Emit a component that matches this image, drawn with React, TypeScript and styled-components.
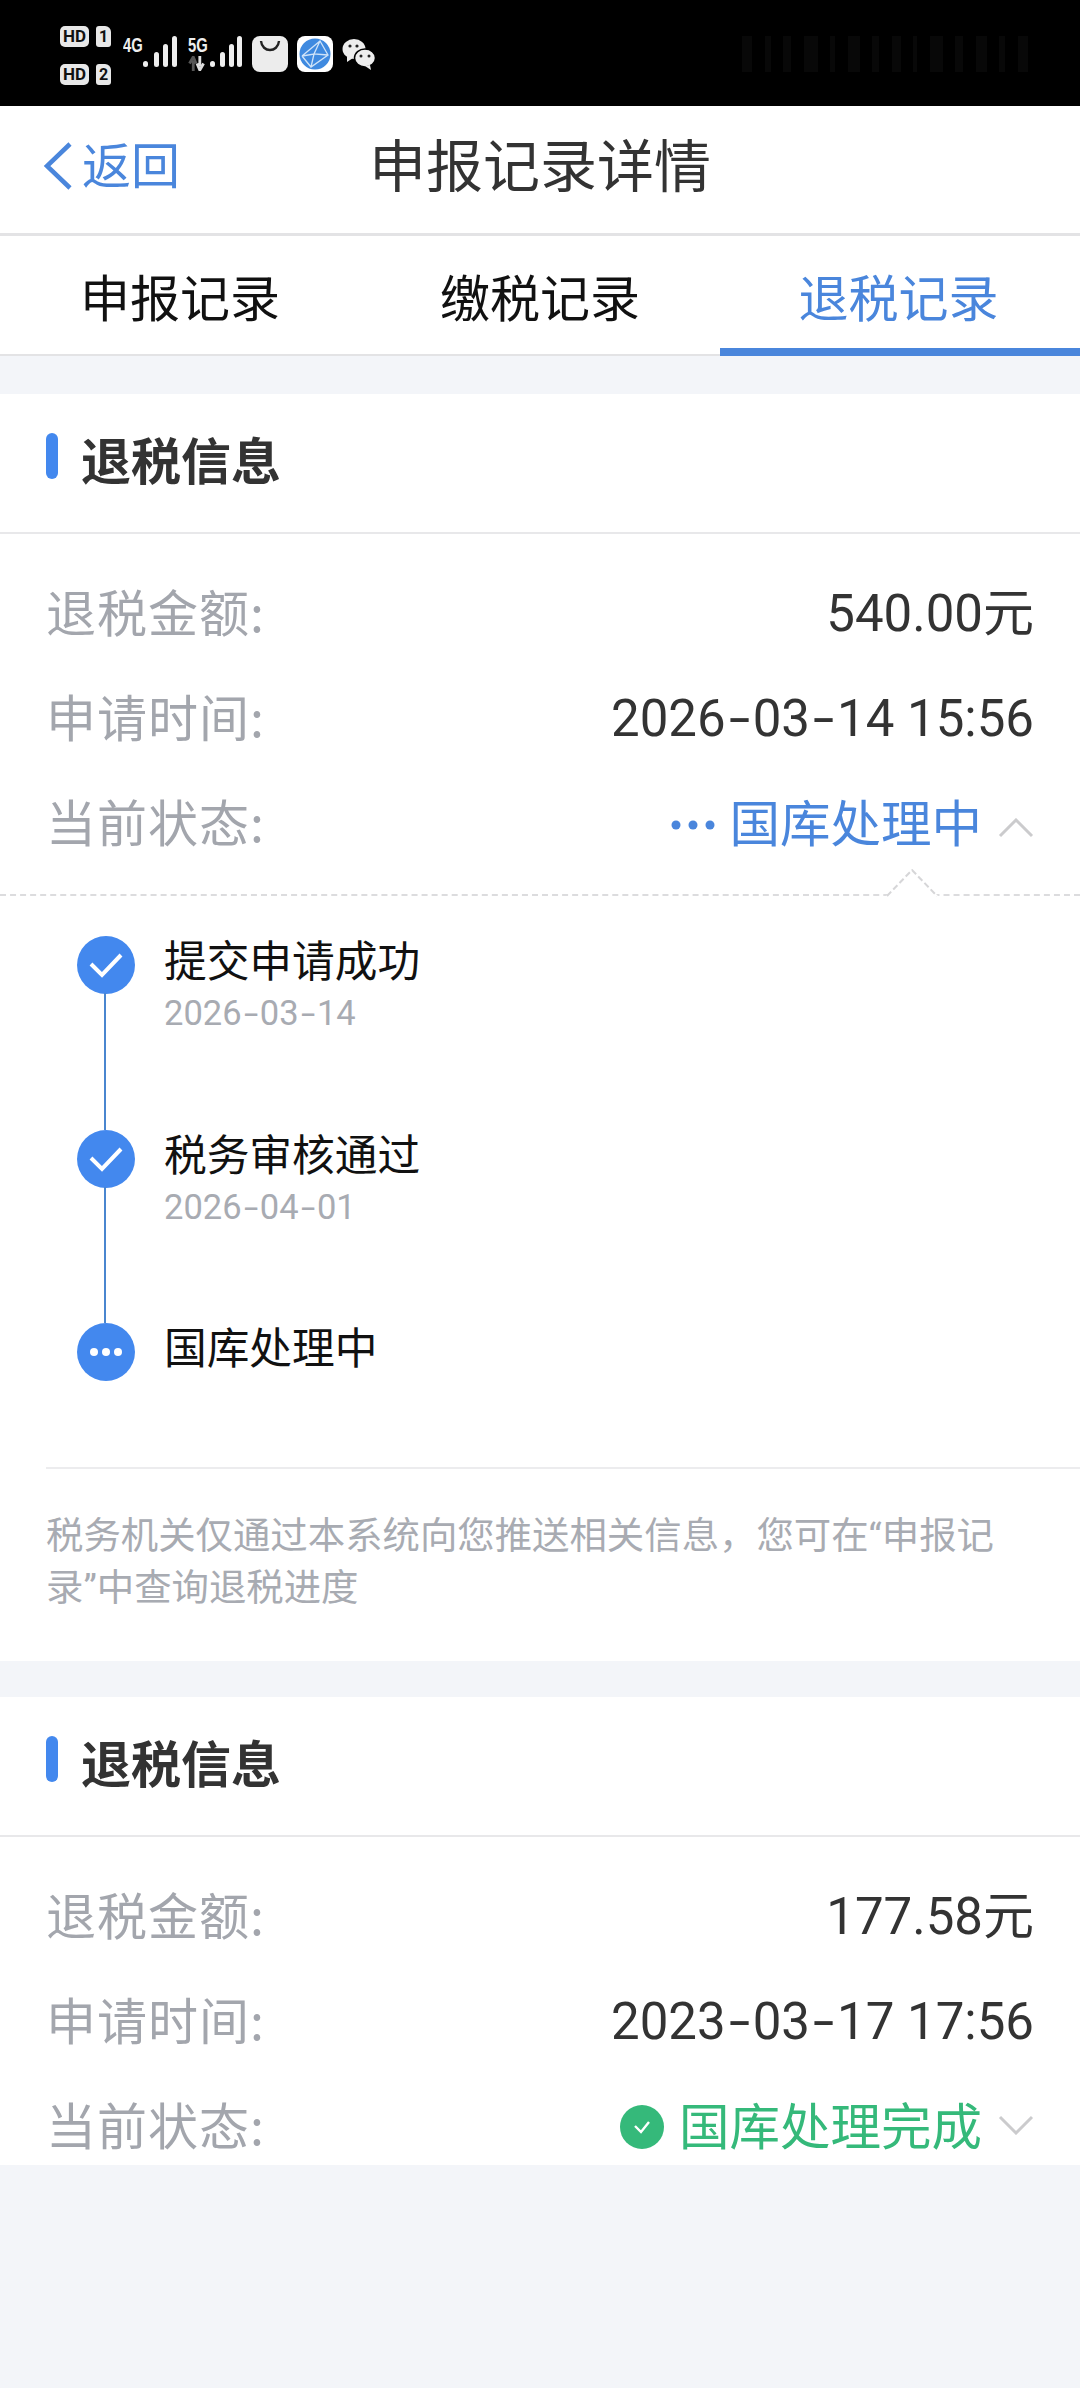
import styled, { createGlobalStyle } from "styled-components";

const BLUE = "#4a86dc";
const SANS = `"Noto Sans CJK SC", sans-serif`;
const DIGITS = `Roboto, "Noto Sans CJK SC", sans-serif`;

const GlobalStyle = createGlobalStyle`
  html, body {
    margin: 0;
    padding: 0;
    background: #f3f5f9;
    font-family: ${SANS};
  }
  * {
    box-sizing: border-box;
  }
`;

type RecordRow = { label: string; value: string };

// the dates in the shot have much wider hyphens than Roboto
function DateText({ text }: { text: string }) {
  const parts = text.split("-");
  return (
    <>
      {parts.map((part, i) => (
        <span key={i}>
          {i > 0 && <Dash>-</Dash>}
          {part}
        </span>
      ))}
    </>
  );
}

function Chevron({ up }: { up?: boolean }) {
  return (
    <ChevronIcon $up={up} viewBox="0 0 36 20" fill="none">
      <path
        d={up ? "M2 18 L18 2 L34 18" : "M2 2 L18 18 L34 2"}
        stroke="#cbcbcd"
        strokeWidth="3"
      />
    </ChevronIcon>
  );
}

function SignalBars({ xs }: { xs: number[] }) {
  const tops = [25, 16, 8, 0];
  return (
    <svg width="36" height="32" viewBox="0 0 36 32">
      {xs.map((x, i) => (
        <rect key={i} x={x} y={tops[i]} width="5" height={31 - tops[i]} rx="2.5" fill="#eee" />
      ))}
    </svg>
  );
}

function StatusBar() {
  return (
    <StatusWrap>
      <SimColumn>
        <SimRow>
          <HdBadge>HD</HdBadge>
          <SimBadge>1</SimBadge>
        </SimRow>
        <SimRow>
          <HdBadge>HD</HdBadge>
          <SimBadge>2</SimBadge>
        </SimRow>
      </SimColumn>
      <Network>
        <NetworkLabel>4G</NetworkLabel>
        <SignalBars xs={[0, 11, 20, 29]} />
      </Network>
      <Network>
        <NetworkLabel>5G</NetworkLabel>
        <Arrows viewBox="0 0 18 16">
          <path d="M5 16 V5 M1 8 L5 1 L8 8" stroke="#555" strokeWidth="3" fill="none" />
          <path d="M12 0 V11 M9 8 L12 15 L16 8" stroke="#ddd" strokeWidth="3" fill="none" />
        </Arrows>
        <SignalBars xs={[2, 12, 21, 29]} />
      </Network>
      <AppIcons>
        <svg width="36" height="36" viewBox="0 0 36 36">
          <rect width="36" height="36" rx="8" fill="#ececec" />
          <path d="M9 5 C10 17 26 17 27 5" stroke="#222" strokeWidth="2.4" fill="none" />
        </svg>
        <svg width="36" height="36" viewBox="0 0 36 36">
          <rect width="36" height="36" rx="8" fill="#fff" />
          <circle cx="18" cy="18" r="15.5" fill="#3f8ae0" />
          <path
            d="M5 20 L23 5 L31 19 L14 31 L5 20 M23 5 L17 18 L31 19 M5 20 L17 18 L14 31"
            stroke="#cfe3f8"
            strokeWidth="1.3"
            fill="none"
          />
        </svg>
        <svg width="34" height="32" viewBox="0 0 34 32">
          <ellipse cx="12" cy="11" rx="11.5" ry="10" fill="#ededed" />
          <path d="M5 18 L5 24 L11 20 Z" fill="#ededed" />
          <ellipse cx="23" cy="20" rx="10.5" ry="9" fill="#ededed" stroke="#000" strokeWidth="1.5" />
          <path d="M28 27 L29 32 L23 28 Z" fill="#ededed" />
          <circle cx="8" cy="8" r="1.6" fill="#222" />
          <circle cx="15" cy="8" r="1.6" fill="#222" />
          <circle cx="19" cy="18" r="1.5" fill="#222" />
          <circle cx="27" cy="18" r="1.5" fill="#222" />
        </svg>
      </AppIcons>
      <HiddenClock>
        {[10, 6, 8, 14, 5, 12, 7, 9, 4, 13, 8, 11, 6, 10].map((w, i) => (
          <ClockBit key={i} $w={w} />
        ))}
      </HiddenClock>
    </StatusWrap>
  );
}

function Steps() {
  return (
    <StepList>
      <Step $line>
        <StepDot>
          <svg width="36" height="28" viewBox="0 0 36 28" fill="none">
            <path d="M3 13 L14 24 L33 4" stroke="#fff" strokeWidth="4" />
          </svg>
        </StepDot>
        <StepText>
          <StepTitle>提交申请成功</StepTitle>
          <StepDate>
            <DateText text="2026-03-14" />
          </StepDate>
        </StepText>
      </Step>
      <Step $line>
        <StepDot>
          <svg width="36" height="28" viewBox="0 0 36 28" fill="none">
            <path d="M3 13 L14 24 L33 4" stroke="#fff" strokeWidth="4" />
          </svg>
        </StepDot>
        <StepText>
          <StepTitle>税务审核通过</StepTitle>
          <StepDate>
            <DateText text="2026-04-01" />
          </StepDate>
        </StepText>
      </Step>
      <Step>
        <StepDot>
          <svg width="36" height="10" viewBox="0 0 36 10" fill="#fff">
            <circle cx="6" cy="5" r="4" />
            <circle cx="18" cy="5" r="4" />
            <circle cx="30" cy="5" r="4" />
          </svg>
        </StepDot>
        <StepText>
          <StepTitle>国库处理中</StepTitle>
        </StepText>
      </Step>
    </StepList>
  );
}

function Rows({ rows }: { rows: RecordRow[] }) {
  return (
    <>
      {rows.map((row) => (
        <Row key={row.label}>
          <Label>{row.label}</Label>
          <Value>
            <DateText text={row.value} />
          </Value>
        </Row>
      ))}
    </>
  );
}

export default function App() {
  return (
    <Page>
      <GlobalStyle />
      <StatusBar />
      <Nav>
        <Back>
          <svg width="30" height="48" viewBox="0 0 30 48" fill="none">
            <path d="M27 2 L4 24 L27 46" stroke={BLUE} strokeWidth="4.5" />
          </svg>
          <BackText>返回</BackText>
        </Back>
        <NavTitle>申报记录详情</NavTitle>
      </Nav>
      <Tabs>
        <Tab>申报记录</Tab>
        <Tab>缴税记录</Tab>
        <Tab $active>退税记录</Tab>
      </Tabs>

      <FirstCard>
        <CardHead>
          <Accent />
          <CardTitle>退税信息</CardTitle>
        </CardHead>
        <CardBody>
          <Rows
            rows={[
              { label: "退税金额:", value: "540.00元" },
              { label: "申请时间:", value: "2026-03-14 15:56" },
            ]}
          />
          <Row>
            <Label>当前状态:</Label>
            <Status $color={BLUE}>
              <DotsIcon viewBox="0 0 44 10" fill={BLUE}>
                <circle cx="5" cy="5" r="4.5" />
                <circle cx="22" cy="5" r="4.5" />
                <circle cx="39" cy="5" r="4.5" />
              </DotsIcon>
              <StatusText>国库处理中</StatusText>
              <Chevron up />
            </Status>
          </Row>
        </CardBody>
        <Expanded>
          <Notch viewBox="0 0 52 28" fill="none">
            <path d="M0 27 L26 1 L52 27 Z" fill="#fff" />
            <path d="M1 27 L26 1 L51 27" stroke="#d6d6d8" strokeWidth="2" strokeDasharray="6 3" />
          </Notch>
          <Steps />
          <Note>
            <NoteText>
              税务机关仅通过本系统向您推送相关信息，您可在“申报记录”中查询退税进度
            </NoteText>
          </Note>
        </Expanded>
      </FirstCard>

      <SecondCard>
        <CardHead>
          <Accent />
          <CardTitle>退税信息</CardTitle>
        </CardHead>
        <CardBody>
          <Rows
            rows={[
              { label: "退税金额:", value: "177.58元" },
              { label: "申请时间:", value: "2023-03-17 17:56" },
            ]}
          />
          <Row>
            <Label>当前状态:</Label>
            <Status $color="#35b97a">
              <DoneDot>
                <svg width="20" height="16" viewBox="0 0 20 16" fill="none">
                  <path d="M3 7 L9 13 L17 3" stroke="#fff" strokeWidth="2.4" />
                </svg>
              </DoneDot>
              <StatusText>国库处理完成</StatusText>
              <Chevron />
            </Status>
          </Row>
        </CardBody>
      </SecondCard>
    </Page>
  );
}

const Page = styled.div`
  width: 1080px;
  height: 2388px;
  background: #f3f5f9;
  overflow: hidden;
`;

const StatusWrap = styled.div`
  height: 106px;
  background: #000;
  display: flex;
  align-items: flex-start;
  padding: 26px 0 0 60px;
`;

const SimColumn = styled.div`
  display: flex;
  flex-direction: column;
  gap: 17px;
  width: 63px;
`;

const SimRow = styled.div`
  display: flex;
  gap: 7px;
`;

const HdBadge = styled.span`
  width: 29px;
  height: 21px;
  border-radius: 5px;
  background: #e8e8e8;
  color: #111;
  font: 700 17px/21px Roboto, sans-serif;
  text-align: center;
`;

const SimBadge = styled.span`
  width: 15px;
  height: 21px;
  border-radius: 3px 6px 3px 3px;
  background: #e8e8e8;
  color: #111;
  font: 700 16px/21px Roboto, sans-serif;
  text-align: center;
`;

const Network = styled.div`
  display: flex;
  align-items: flex-start;
  height: 46px;
  margin-top: 10px;
  position: relative;
  width: 65px;
`;

const NetworkLabel = styled.span`
  color: #eee;
  font: 700 20px/18px "Liberation Sans", sans-serif;
  transform: scaleX(0.74);
  transform-origin: left;
  width: 20px;
`;

const Arrows = styled.svg`
  position: absolute;
  left: 0;
  top: 20px;
  width: 18px;
  height: 15px;
`;

const AppIcons = styled.div`
  display: flex;
  align-items: center;
  gap: 9px;
  margin-top: 10px;
  margin-left: -1px;
`;

const HiddenClock = styled.div`
  margin-left: auto;
  margin-right: 52px;
  margin-top: 10px;
  width: 286px;
  height: 36px;
  display: flex;
  justify-content: space-between;
`;

const ClockBit = styled.span<{ $w: number }>`
  width: ${(p) => p.$w}px;
  height: 100%;
  background: #080808;
`;

const Nav = styled.div`
  height: 130px;
  background: #fff;
  border-bottom: 3px solid #e3e3e5;
  position: relative;
  display: flex;
  align-items: center;
  justify-content: center;
  padding-bottom: 16px;
`;

const Back = styled.div`
  position: absolute;
  left: 43px;
  top: 33px;
  display: flex;
  align-items: center;
  gap: 9px;
`;

const BackText = styled.span`
  color: ${BLUE};
  font-size: 49px;
  line-height: 60px;
  margin-top: -6px;
`;

const NavTitle = styled.h1`
  margin: 0;
  font-size: 57px;
  font-weight: 400;
  color: #333;
  line-height: 70px;
`;

const Tabs = styled.div`
  height: 120px;
  background: #fff;
  border-bottom: 2px solid #e3e3e5;
  display: grid;
  grid-template-columns: repeat(3, 1fr);
`;

const Tab = styled.div<{ $active?: boolean }>`
  height: 120px;
  display: flex;
  align-items: center;
  justify-content: center;
  padding-bottom: 3px;
  font-size: 50px;
  color: ${(p) => (p.$active ? BLUE : "#111")};
  border-bottom: ${(p) => (p.$active ? `8px solid ${BLUE}` : "none")};
  padding-top: ${(p) => (p.$active ? "8px" : "0")};
  padding-right: ${(p) => (p.$active ? "3px" : "0")};
`;

const FirstCard = styled.section`
  margin-top: 38px;
  background: #fff;
`;

const SecondCard = styled.section`
  margin-top: 36px;
  height: 468px;
  overflow: hidden;
  background: #fff;
`;

const CardHead = styled.div`
  height: 140px;
  display: flex;
  align-items: center;
  gap: 23px;
  padding: 0 46px 11px;
  border-bottom: 2px solid #e8e8ea;
`;

const Accent = styled.span`
  width: 12px;
  height: 46px;
  border-radius: 6px;
  background: #4388ee;
  margin-top: -4px;
`;

const CardTitle = styled.h2`
  margin: 0;
  font-size: 50px;
  font-weight: 700;
  color: #333;
  line-height: 60px;
`;

const CardBody = styled.div`
  padding: 27px 46px 18px;
`;

const Row = styled.div`
  height: 105px;
  display: flex;
  align-items: center;
  justify-content: space-between;
`;

const Label = styled.span`
  font-size: 50px;
  letter-spacing: 1px;
  color: #a3a6ad;
  margin-bottom: 7px;
`;

const Value = styled.span`
  font-family: ${DIGITS};
  font-size: 51px;
  line-height: 60px;
  color: #333;
`;

const Dash = styled.span`
  display: inline-block;
  width: 0.53em;
  text-align: center;
  transform: scaleX(1.5);
`;

const Status = styled.div<{ $color: string }>`
  display: flex;
  align-items: center;
  color: ${(p) => p.$color};
`;

const DotsIcon = styled.svg`
  width: 44px;
  height: 10px;
  margin-top: 3px;
`;

const StatusText = styled.span`
  font-size: 50.5px;
  margin: 0 16px 7px 15px;
`;

const ChevronIcon = styled.svg<{ $up?: boolean }>`
  width: 36px;
  height: 20px;
  margin-top: ${(p) => (p.$up ? "9px" : "-3px")};
`;

const DoneDot = styled.span`
  width: 44px;
  height: 44px;
  border-radius: 50%;
  background: #35b97a;
  display: flex;
  align-items: center;
  justify-content: center;
`;

const Expanded = styled.div`
  position: relative;
  border-top: 2px dashed #dcdcde;
  padding-top: 40px;
`;

const Notch = styled.svg`
  position: absolute;
  right: 142px;
  top: -27px;
  width: 52px;
  height: 28px;
`;

const StepList = styled.div`
  height: 531px;
  padding-left: 77px;
`;

const Step = styled.div<{ $line?: boolean }>`
  position: relative;
  height: 193.5px;
  display: flex;
  gap: 29px;

  ${(p) =>
    p.$line &&
    `
    &::after {
      content: "";
      position: absolute;
      left: 27px;
      top: 57px;
      bottom: 0;
      width: 2px;
      background: #4a86cf;
    }
  `}
`;

const StepDot = styled.span`
  width: 58px;
  height: 58px;
  border-radius: 50%;
  background: #4388ee;
  flex: none;
  display: flex;
  align-items: center;
  justify-content: center;
`;

const StepText = styled.div`
  display: flex;
  flex-direction: column;
  margin-top: -8px;
`;

const StepTitle = styled.div`
  font-size: 42.7px;
  line-height: 60px;
  color: #111;
`;

const StepDate = styled.div`
  font-family: ${DIGITS};
  font-size: 34.5px;
  line-height: 44px;
  margin-top: 3px;
  color: #a8abb2;
`;

const Note = styled.div`
  margin-left: 46px;
  border-top: 2px solid #ececee;
  padding: 41px 70px 47px 0;
`;

const NoteText = styled.p`
  margin: 0;
  font-family: ${DIGITS};
  font-size: 37.4px;
  line-height: 52px;
  color: #a8abb2;
`;
